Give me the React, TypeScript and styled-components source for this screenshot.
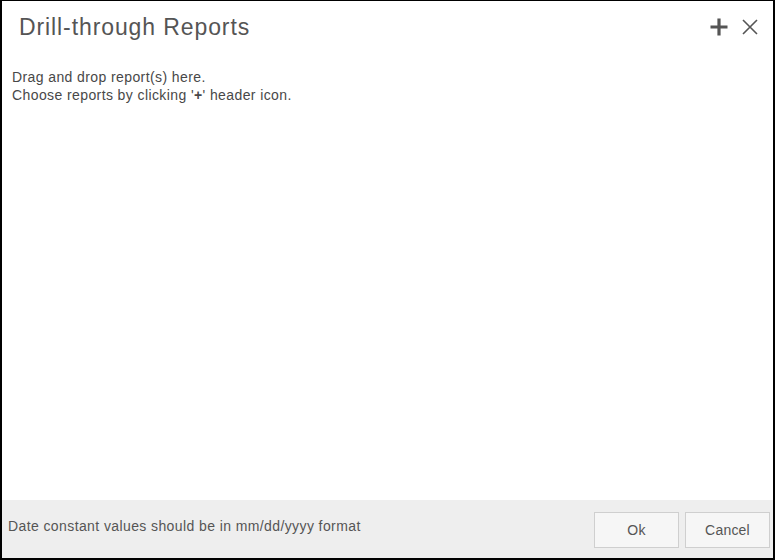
import React from "react";
import styled, { createGlobalStyle } from "styled-components";

const Global = createGlobalStyle`
  html, body { margin: 0; padding: 0; background: #fff; }
  body { font-family: "Liberation Sans", Arial, sans-serif; }
  * { box-sizing: border-box; }
`;

const Dialog = styled.div`
  width: 775px;
  height: 560px;
  border-top: 1px solid #000;
  border-bottom: 2px solid #000;
  border-left: 2px solid #000;
  border-right: 2px solid #000;
  display: flex;
  flex-direction: column;
  background: #fff;
`;

const Header = styled.div`
  height: 52px;
  display: flex;
  align-items: center;
  padding: 0 14px 0 17px;
`;

const Title = styled.h1`
  flex: 1;
  margin: 0;
  font-size: 23px;
  font-weight: 400;
  color: #555;
  letter-spacing: 0.9px;
`;

const IconButton = styled.button<{ $gap?: number }>`
  border: 0;
  background: transparent;
  padding: 0;
  margin-left: ${(p) => p.$gap ?? 0}px;
  display: flex;
  align-items: center;
  justify-content: center;
  cursor: pointer;
`;

const Body = styled.div`
  flex: 1;
  padding: 15px 10px;
  font-size: 14px;
  line-height: 18px;
  letter-spacing: 0.4px;
  color: #484848;
`;

const Footer = styled.div`
  height: 58px;
  background: #eeeeee;
  display: flex;
  align-items: center;
  padding: 0 3px 0 6px;
`;

const Note = styled.div`
  flex: 1;
  font-size: 14px;
  letter-spacing: 0.4px;
  color: #555;
  padding-bottom: 6px;
`;

const Button = styled.button`
  width: 85px;
  height: 36px;
  margin-left: 6px;
  margin-top: 2px;
  background: #f6f6f6;
  border: 1px solid #cfcfcf;
  font-family: "Liberation Sans", Arial, sans-serif;
  font-size: 14px;
  letter-spacing: 0.2px;
  color: #555;
`;

export default function App() {
  return (
    <>
      <Global />
      <Dialog>
        <Header>
          <Title>Drill-through Reports</Title>
          <IconButton aria-label="Add">
            <svg width="20" height="20" viewBox="0 0 20 20">
              <path d="M10 1.5v17M1.5 10h17" stroke="#555" strokeWidth="3.2" />
            </svg>
          </IconButton>
          <IconButton aria-label="Close" $gap={12}>
            <svg width="18" height="18" viewBox="0 0 18 18">
              <path d="M2 2l14 14M16 2L2 16" stroke="#555" strokeWidth="1.6" />
            </svg>
          </IconButton>
        </Header>
        <Body>
          Drag and drop report(s) here.
          <br />
          Choose reports by clicking '<b>+</b>' header icon.
        </Body>
        <Footer>
          <Note>Date constant values should be in mm/dd/yyyy format</Note>
          <Button>Ok</Button>
          <Button>Cancel</Button>
        </Footer>
      </Dialog>
    </>
  );
}
